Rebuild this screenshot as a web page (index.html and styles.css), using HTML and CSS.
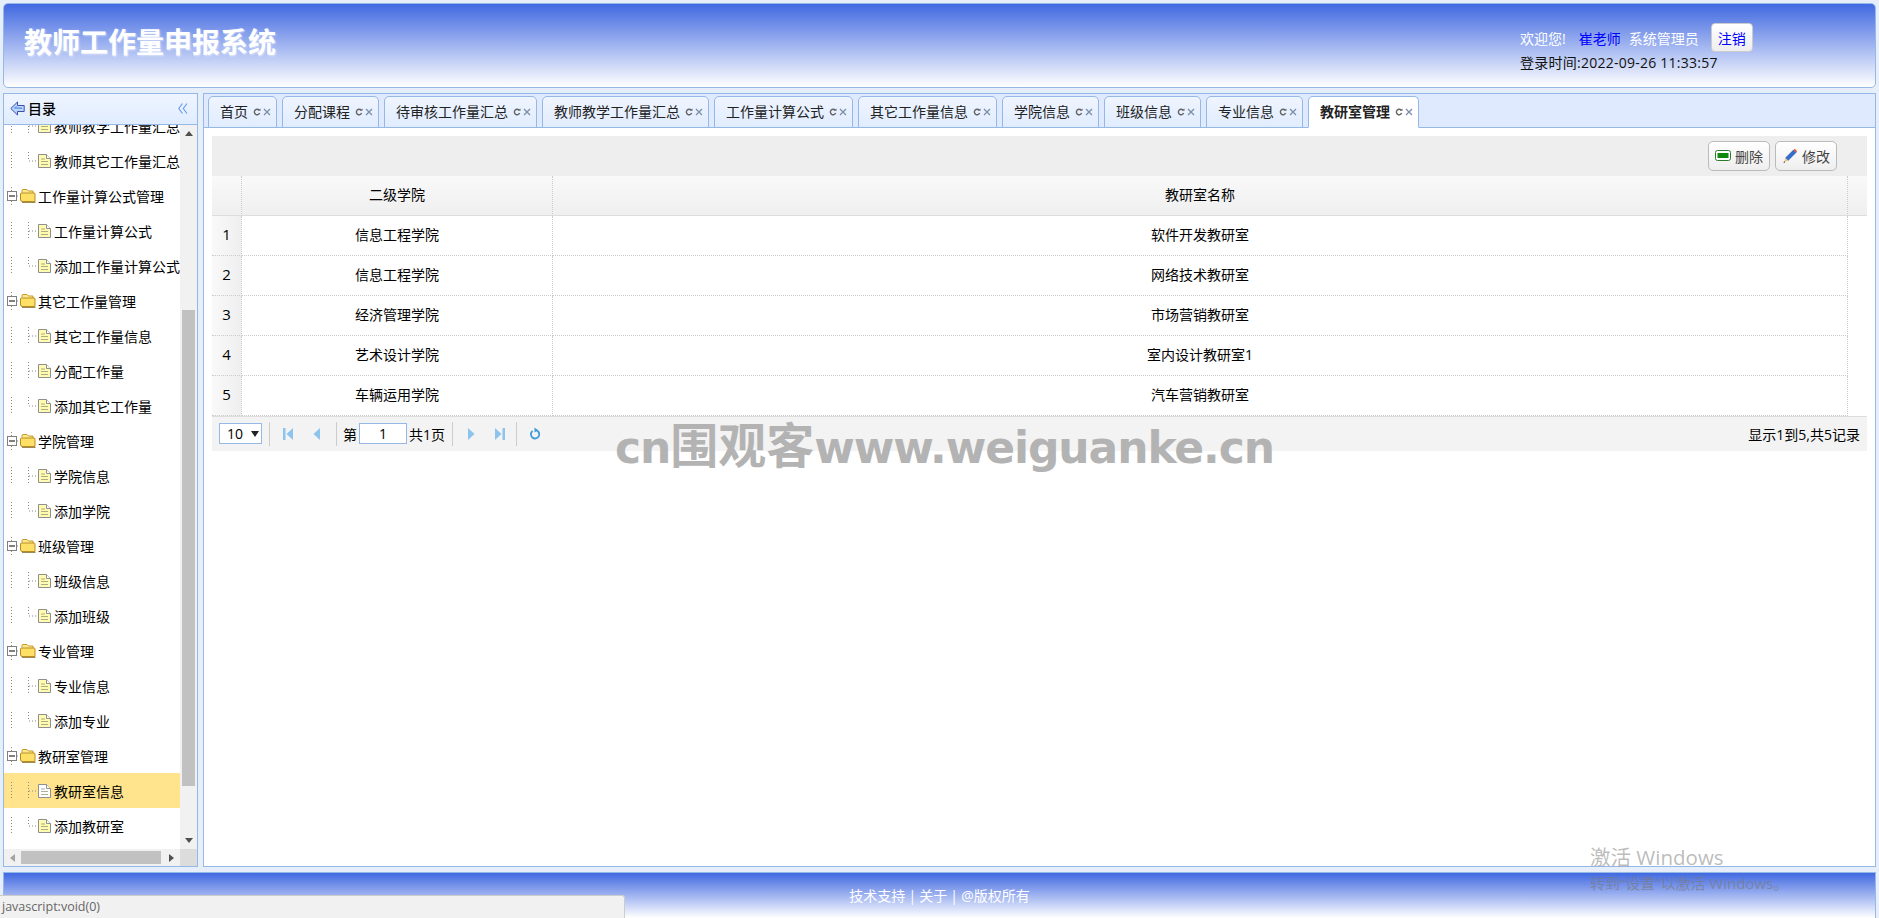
FILE: index.html
```html
<!DOCTYPE html>
<html lang="zh-CN">
<head>
    <meta charset="UTF-8">
    <meta name="viewport" content="width=device-width, initial-scale=1.0">
    <title>教师工作量申报系统</title>
    <link rel="stylesheet" href="styles.css">
</head>
<body>
    <svg class="sprites" width="0" height="0">
        <symbol id="lead-tee" viewBox="0 0 34 24">
            <path d="M7.500 3V21M24.500 3V21M25 12H33" stroke="#888" stroke-dasharray="1 2" fill="none"/>
        </symbol>
        <symbol id="lead-end" viewBox="0 0 34 24">
            <path d="M7.500 3V21M24.500 3V12M25 12H33" stroke="#888" stroke-dasharray="1 2" fill="none"/>
        </symbol>
        <symbol id="file" viewBox="0 0 13 14">
            <path d="M.5.5H8.500L12.500 4.500V13.500H.5Z" fill="var(--sheet, #fffbb0)" stroke="#8f8f8f"/>
            <path d="M8.500.5V4.500H12.500" fill="#fff" stroke="#8f8f8f"/>
            <path d="M3 5H7M3 7.500H10M3 10.500H10" stroke="#8a8a70" stroke-width=".7"/>
        </symbol>
        <symbol id="folder" viewBox="0 0 34 24">
            <path d="M7.500 3V7M7.500 17V22M13 12H16" stroke="#888" stroke-dasharray="1 2" fill="none"/>
            <rect x="3.500" y="7.500" width="9" height="9" fill="#fff" stroke="#808080"/>
            <path d="M5 12H11" stroke="#000"/>
            <path d="M18 8.500V6.500Q18 5.500 19 5.500H23L24.500 7H29V9" fill="#ffe98a" stroke="#c79a2a"/>
            <path d="M16.500 10Q16.500 9 17.500 9H30Q31 9 31 10V17.500H18Q16.500 17.500 16.500 15Z" fill="#ffe066" stroke="#b98c1e"/>
            <path d="M18 18.500H31.500" stroke="#9c8a5a"/>
        </symbol>
        <symbol id="tab-reload" viewBox="0 0 8 8">
            <path d="M6.200 2.300A2.700 2.700 0 1 0 6.600 5" fill="none" stroke="#666" stroke-width="1.400"/>
            <path d="M4.800 2.800H7.500V.4Z" fill="#666"/>
        </symbol>
        <symbol id="tab-close" viewBox="0 0 8 8">
            <path d="M1 1L7 7M7 1L1 7" stroke="#7b8ea8" stroke-width="1.300"/>
        </symbol>
    </svg>

    <header class="top-bar">
        <h1 class="app-title">教师工作量申报系统</h1>
        <div class="user-box">
            <div class="user-line">
                <span class="welcome">欢迎您!</span>
                <a class="user-name">崔老师</a>
                <span class="welcome">系统管理员</span>
                <button class="logout">注销</button>
            </div>
            <div class="login-time">登录时间:2022-09-26 11:33:57</div>
        </div>
    </header>

    <main class="workspace">
        <aside class="side-panel">
            <div class="side-head">
                <svg class="side-icon" width="15" height="15" viewBox="0 0 15 15">
                    <path d="M.8 7.500L7.500 1V4.500H14.200V10.500H7.500V14Z" fill="#bcd6f8" stroke="#3a4fb0"/>
                    <path d="M3.500 7.500L6.500 4.800V6.500H12V8Z" fill="#5b93e6"/>
                </svg>
                <span class="side-title">目录</span>
                <svg class="side-collapse" width="10" height="11" viewBox="0 0 10 11">
                    <path d="M4.500 .5L.8 5.500L4.500 10.500M9 .5L5.300 5.500L9 10.500" fill="none" stroke="#6f9fe6" stroke-width="1.200"/>
                </svg>
            </div>
            <div class="side-body">
                <div class="tree-view">
                    <ul class="tree">
                        <li class="leaf"><svg class="lead"><use href="#lead-tee"/></svg><svg class="file"><use href="#file"/></svg>教师教学工作量汇总</li>
                        <li class="leaf"><svg class="lead"><use href="#lead-end"/></svg><svg class="file"><use href="#file"/></svg>教师其它工作量汇总</li>
                        <li class="leaf"><svg class="lead"><use href="#folder"/></svg>工作量计算公式管理</li>
                        <li class="leaf"><svg class="lead"><use href="#lead-tee"/></svg><svg class="file"><use href="#file"/></svg>工作量计算公式</li>
                        <li class="leaf"><svg class="lead"><use href="#lead-end"/></svg><svg class="file"><use href="#file"/></svg>添加工作量计算公式</li>
                        <li class="leaf"><svg class="lead"><use href="#folder"/></svg>其它工作量管理</li>
                        <li class="leaf"><svg class="lead"><use href="#lead-tee"/></svg><svg class="file"><use href="#file"/></svg>其它工作量信息</li>
                        <li class="leaf"><svg class="lead"><use href="#lead-tee"/></svg><svg class="file"><use href="#file"/></svg>分配工作量</li>
                        <li class="leaf"><svg class="lead"><use href="#lead-end"/></svg><svg class="file"><use href="#file"/></svg>添加其它工作量</li>
                        <li class="leaf"><svg class="lead"><use href="#folder"/></svg>学院管理</li>
                        <li class="leaf"><svg class="lead"><use href="#lead-tee"/></svg><svg class="file"><use href="#file"/></svg>学院信息</li>
                        <li class="leaf"><svg class="lead"><use href="#lead-end"/></svg><svg class="file"><use href="#file"/></svg>添加学院</li>
                        <li class="leaf"><svg class="lead"><use href="#folder"/></svg>班级管理</li>
                        <li class="leaf"><svg class="lead"><use href="#lead-tee"/></svg><svg class="file"><use href="#file"/></svg>班级信息</li>
                        <li class="leaf"><svg class="lead"><use href="#lead-end"/></svg><svg class="file"><use href="#file"/></svg>添加班级</li>
                        <li class="leaf"><svg class="lead"><use href="#folder"/></svg>专业管理</li>
                        <li class="leaf"><svg class="lead"><use href="#lead-tee"/></svg><svg class="file"><use href="#file"/></svg>专业信息</li>
                        <li class="leaf"><svg class="lead"><use href="#lead-end"/></svg><svg class="file"><use href="#file"/></svg>添加专业</li>
                        <li class="leaf"><svg class="lead"><use href="#folder"/></svg>教研室管理</li>
                        <li class="leaf selected"><svg class="lead"><use href="#lead-tee"/></svg><svg class="file"><use href="#file"/></svg>教研室信息</li>
                        <li class="leaf"><svg class="lead"><use href="#lead-end"/></svg><svg class="file"><use href="#file"/></svg>添加教研室</li>
                    </ul>
                </div>
                <div class="v-scroll">
                    <span class="arrow arrow-up"></span>
                    <span class="v-thumb"></span>
                    <span class="arrow arrow-down"></span>
                </div>
            </div>
            <div class="h-scroll">
                <span class="arrow arrow-left"></span>
                <span class="h-thumb"></span>
                <span class="arrow arrow-right"></span>
                <span class="corner"></span>
            </div>
        </aside>

        <section class="center-panel">
            <nav class="tabs">
                <a class="tab">首页<svg class="tab-btn first"><use href="#tab-reload"/></svg><svg class="tab-btn"><use href="#tab-close"/></svg></a>
                <a class="tab">分配课程<svg class="tab-btn first"><use href="#tab-reload"/></svg><svg class="tab-btn"><use href="#tab-close"/></svg></a>
                <a class="tab">待审核工作量汇总<svg class="tab-btn first"><use href="#tab-reload"/></svg><svg class="tab-btn"><use href="#tab-close"/></svg></a>
                <a class="tab">教师教学工作量汇总<svg class="tab-btn first"><use href="#tab-reload"/></svg><svg class="tab-btn"><use href="#tab-close"/></svg></a>
                <a class="tab">工作量计算公式<svg class="tab-btn first"><use href="#tab-reload"/></svg><svg class="tab-btn"><use href="#tab-close"/></svg></a>
                <a class="tab">其它工作量信息<svg class="tab-btn first"><use href="#tab-reload"/></svg><svg class="tab-btn"><use href="#tab-close"/></svg></a>
                <a class="tab">学院信息<svg class="tab-btn first"><use href="#tab-reload"/></svg><svg class="tab-btn"><use href="#tab-close"/></svg></a>
                <a class="tab">班级信息<svg class="tab-btn first"><use href="#tab-reload"/></svg><svg class="tab-btn"><use href="#tab-close"/></svg></a>
                <a class="tab">专业信息<svg class="tab-btn first"><use href="#tab-reload"/></svg><svg class="tab-btn"><use href="#tab-close"/></svg></a>
                <a class="tab active">教研室管理<svg class="tab-btn first"><use href="#tab-reload"/></svg><svg class="tab-btn"><use href="#tab-close"/></svg></a>
            </nav>
            <div class="tab-body">
                <div class="toolbar">
                    <button class="tool-btn">
                        <svg width="16" height="16" viewBox="0 0 16 16">
                            <rect x=".5" y="2.500" width="15" height="10" rx="2" fill="#fff" stroke="#2c7a2c"/>
                            <rect x="2.500" y="5" width="11" height="5" fill="#0f8a0f"/>
                        </svg>
                        删除
                    </button>
                    <button class="tool-btn">
                        <svg width="16" height="16" viewBox="0 0 16 16">
                            <path d="M3.500 10L11.500 2L14 4.500L6 12.500Z" fill="#2f6fd0" stroke="#1c4c9c" stroke-width=".6"/>
                            <path d="M11.500 2L12.800 .8L15.200 3.200L14 4.500Z" fill="#e8563c"/>
                            <path d="M3.500 10L6 12.500L1.500 15Z" fill="#f0c98a"/>
                            <path d="M1.500 15L2.300 13.300L3.200 14.200Z" fill="#333"/>
                        </svg>
                        修改
                    </button>
                </div>
                <table class="grid">
                    <colgroup>
                        <col class="col-num"><col class="col-college"><col><col class="col-fill">
                    </colgroup>
                    <thead>
                        <tr><th></th><th>二级学院</th><th>教研室名称</th><th></th></tr>
                    </thead>
                    <tbody>
                        <tr><td class="row-num">1</td><td>信息工程学院</td><td>软件开发教研室</td><td class="blank"></td></tr>
                        <tr><td class="row-num">2</td><td>信息工程学院</td><td>网络技术教研室</td><td class="blank"></td></tr>
                        <tr><td class="row-num">3</td><td>经济管理学院</td><td>市场营销教研室</td><td class="blank"></td></tr>
                        <tr><td class="row-num">4</td><td>艺术设计学院</td><td>室内设计教研室1</td><td class="blank"></td></tr>
                        <tr><td class="row-num">5</td><td>车辆运用学院</td><td>汽车营销教研室</td><td class="blank"></td></tr>
                    </tbody>
                </table>
                <div class="pager">
                    <div class="page-size">10<span class="caret"></span></div>
                    <span class="sep"></span>
                    <svg class="page-icon" viewBox="0 0 12 14"><path d="M1 1H3.500V13H1ZM11 1V13L4.500 7Z" fill="#8cc4ee"/></svg>
                    <svg class="page-icon" viewBox="0 0 12 14"><path d="M9 1V13L2.500 7Z" fill="#8cc4ee"/></svg>
                    <span class="sep"></span>
                    <span class="page-label">第</span>
                    <span class="page-input">1</span>
                    <span class="page-label">共1页</span>
                    <span class="sep"></span>
                    <svg class="page-icon" viewBox="0 0 12 14"><path d="M3 1V13L9.500 7Z" fill="#8cc4ee"/></svg>
                    <svg class="page-icon page-last" viewBox="0 0 12 14"><path d="M1 1V13L7.500 7ZM8.500 1H11V13H8.500Z" fill="#8cc4ee"/></svg>
                    <span class="sep"></span>
                    <svg class="page-icon" viewBox="0 0 12 14"><path d="M7 3.200A4.200 4.200 0 1 1 3.600 3.900" fill="none" stroke="#3c9bd8" stroke-width="1.800"/><path d="M5.500 .5L9 3.200L5.500 5.500Z" fill="#3c9bd8"/></svg>
                    <span class="page-info">显示1到5,共5记录</span>
                </div>
            </div>
        </section>
    </main>

    <footer class="bottom-bar">技术支持 | 关于 | @版权所有</footer>

    <div class="status-bubble">javascript:void(0)</div>
    <div class="site-mark"><span class="mark-latin">cn</span>围观客<span class="mark-latin">www.weiguanke.cn</span></div>
    <div class="activate">
        <div class="activate-title">激活 Windows</div>
        <div class="activate-sub">转到“设置”以激活 Windows。</div>
    </div>
</body>
</html>
```

FILE: styles.css
```css
* {
    box-sizing: border-box;
}
html, body {
    height: 100%;
}
body {
    margin: 0;
    padding: 3px 3px 0 3px;
    display: flex;
    flex-direction: column;
    gap: 5px;
    overflow: hidden;
    background: #e6eefa;
    color: #000;
    font-family: "Open Sans", "Noto Sans CJK SC", sans-serif;
    font-size: 14px;
}
.sprites {
    position: absolute;
}

/* top */
.top-bar {
    height: 85px;
    flex: none;
    display: flex;
    justify-content: space-between;
    align-items: center;
    padding: 0 112px 0 20px;
    border: 1px solid #95b8e7;
    border-radius: 5px;
    background: linear-gradient(to bottom, #4169e1, #fff);
}
.app-title {
    margin: 0 0 8px;
    font-size: 28px;
    line-height: 40px;
    color: #fff;
    text-shadow: 1px 1px 2px rgba(255, 255, 255, 0.5);
}
.user-box {
    width: 243px;
    margin-top: 5px;
}
.user-line {
    display: flex;
    align-items: center;
    height: 29px;
}
.welcome {
    color: #fff;
}
.user-name {
    margin: 0 8px 0 13px;
    color: #00f;
}
.logout {
    width: 42px;
    height: 29px;
    margin-left: 12px;
    padding: 0;
    border: 1px solid #ccc;
    border-radius: 4px;
    background: linear-gradient(to bottom, #fff, #eee);
    color: #00f;
    font: inherit;
}
.login-time {
    margin-top: 1px;
    line-height: 20px;
    letter-spacing: 0.25px;
    color: #111;
}

/* main area */
.workspace {
    flex: none;
    height: 774px;
    display: flex;
    gap: 5px;
}
.side-panel {
    width: 195px;
    flex: none;
    display: flex;
    flex-direction: column;
    border: 1px solid #95b8e7;
    background: #fff;
}
.side-head {
    height: 31px;
    flex: none;
    display: flex;
    align-items: center;
    padding: 0 9px 2px 6px;
    border-bottom: 1px solid #95b8e7;
    background: linear-gradient(to bottom, #eff5ff, #e0ecff);
}
.side-title {
    margin-left: 3px;
    font-weight: 500;
}
.side-collapse {
    margin-left: auto;
}
.side-body {
    flex: 1;
    min-height: 0;
    display: flex;
}
.tree-view {
    flex: 1;
    min-width: 0;
    overflow: hidden;
}
.tree {
    margin: -17px 0 0;
    padding: 0;
    list-style: none;
}
.leaf {
    height: 35px;
    display: flex;
    align-items: center;
    white-space: nowrap;
}
.leaf.selected {
    --sheet: #fff;
    background: #ffe48d;
}
.lead {
    width: 34px;
    height: 24px;
    flex: none;
}
.file {
    width: 13px;
    height: 14px;
    flex: none;
    margin-right: 3px;
}
.v-scroll {
    width: 17px;
    flex: none;
    display: flex;
    flex-direction: column;
    align-items: center;
    background: #f1f1f1;
}
.v-thumb {
    width: 13px;
    height: 476px;
    margin-top: 168px;
    background: #c1c1c1;
}
.arrow {
    width: 17px;
    height: 17px;
    flex: none;
    display: flex;
    align-items: center;
    justify-content: center;
}
.arrow::before {
    content: "";
    border: 4px solid transparent;
}
.arrow-up::before {
    border-top-width: 0;
    border-bottom: 5px solid #505050;
}
.arrow-down {
    margin-top: auto;
}
.arrow-down::before {
    border-bottom-width: 0;
    border-top: 5px solid #505050;
}
.arrow-left::before {
    border-left-width: 0;
    border-right: 5px solid #a3a3a3;
}
.arrow-right::before {
    border-right-width: 0;
    border-left: 5px solid #505050;
}
.h-scroll {
    height: 17px;
    flex: none;
    display: flex;
    align-items: center;
    background: #f1f1f1;
}
.h-thumb {
    width: 140px;
    height: 13px;
    background: #c1c1c1;
}
.arrow-right {
    margin-left: auto;
}
.corner {
    width: 17px;
    height: 17px;
    background: #dcdcdc;
}

/* tabs */
.center-panel {
    flex: 1;
    min-width: 0;
    display: flex;
    flex-direction: column;
    border: 1px solid #95b8e7;
    background: #fff;
}
.tabs {
    height: 34px;
    flex: none;
    display: flex;
    align-items: flex-end;
    gap: 5px;
    padding-left: 4px;
    border-bottom: 1px solid #95b8e7;
    background: #dfeaff;
}
.tab {
    height: 32px;
    margin-bottom: -1px;
    display: flex;
    align-items: center;
    padding: 0 0 2px 11px;
    border: 1px solid #95b8e7;
    border-radius: 5px 5px 0 0;
    background: linear-gradient(to bottom, #eff5ff, #e0ecff);
    color: #222;
}
.tab.active {
    border-bottom-color: #fff;
    background: #fff;
    font-weight: 700;
}
.tab-btn {
    width: 8px;
    height: 8px;
    flex: none;
    margin: 2px 5px 0 0;
}
.tab-btn.first {
    margin-left: 5px;
    margin-right: 2px;
}
.tab-body {
    flex: 1;
    padding: 8px;
}
.toolbar {
    height: 40px;
    display: flex;
    align-items: center;
    justify-content: flex-end;
    gap: 5px;
    padding-right: 30px;
    background: #eee;
}
.tool-btn {
    width: 62px;
    height: 30px;
    display: flex;
    align-items: center;
    gap: 4px;
    padding: 0 0 0 6px;
    border: 1px solid #bbb;
    border-radius: 5px;
    background: linear-gradient(to bottom, #fff, #eee);
    color: #444;
    font: inherit;
}

/* grid */
.grid {
    width: 100%;
    table-layout: fixed;
    border-collapse: separate;
    border-spacing: 0;
}
.col-num {
    width: 30px;
}
.col-college {
    width: 311px;
}
.col-fill {
    width: 19px;
}
.grid th {
    height: 40px;
    padding: 0 0 3px;
    border-right: 1px dotted #ccc;
    border-bottom: 1px solid #ddd;
    background: linear-gradient(to bottom, #f9f9f9, #efefef);
    font-weight: 400;
}
.grid th:last-child {
    border-right: 0;
}
.grid td {
    height: 40px;
    padding: 0 0 3px;
    border-right: 1px dotted #ccc;
    border-bottom: 1px dotted #ccc;
    text-align: center;
}
.grid .row-num {
    background: linear-gradient(to right, #f9f9f9, #efefef);
    font-size: 15px;
}
.grid .blank {
    border-right: 0;
    border-bottom: 0;
}

/* pager */
.pager {
    height: 35px;
    display: flex;
    align-items: center;
    padding: 0 7px 1px;
    border-top: 1px solid #ddd;
    background: #f3f3f3;
}
.page-size {
    width: 43px;
    height: 21px;
    display: flex;
    align-items: center;
    padding-left: 7px;
    border: 1px solid #95b8e7;
    background: #fff;
    line-height: 19px;
}
.caret {
    margin: 1px 0 0 8px;
    border: 4px solid transparent;
    border-bottom-width: 0;
    border-top: 6px solid #222;
}
.sep {
    width: 1px;
    height: 24px;
    margin: 0 7px;
    background: #ccc;
}
.sep + .page-label {
    margin-left: -1px;
}
.page-icon {
    width: 12px;
    height: 14px;
    margin: 0 6px;
}
.page-icon + .page-icon {
    margin-left: 11px;
}
.sep + .page-icon {
    margin-left: 5px;
}
.page-icon.page-last {
    margin-right: 3px;
}
.page-input {
    width: 48px;
    height: 21px;
    margin: 0 2px;
    border: 1px solid #95b8e7;
    background: #fff;
    line-height: 19px;
    text-align: center;
}
.page-info {
    margin-left: auto;
}

/* bottom */
.bottom-bar {
    height: 46px;
    flex: none;
    padding-top: 11px;
    border: 1px solid #95b8e7;
    border-bottom: 0;
    background: linear-gradient(to bottom, #4169e1, #fff);
    color: #fff;
    line-height: 24px;
    word-spacing: -0.500px;
    text-align: center;
}

/* things drawn over the page */
.status-bubble {
    position: absolute;
    left: 0;
    bottom: 0;
    width: 625px;
    height: 23px;
    padding-left: 2px;
    border-top: 1px solid #ccc;
    border-right: 1px solid #ccc;
    border-radius: 0 3px 0 0;
    background: #f1f1f1;
    color: #666;
    font-size: 12.500px;
    line-height: 22px;
}
.site-mark {
    position: absolute;
    left: 615px;
    top: 409px;
    color: #b3b3b3;
    font-family: "Noto Sans CJK SC", sans-serif;
    font-size: 48px;
    font-weight: 700;
    line-height: 66px;
    white-space: nowrap;
}
.mark-latin {
    font-family: "DejaVu Sans", sans-serif;
    font-size: 44px;
    letter-spacing: -1.100px;
}
.activate {
    position: absolute;
    left: 1590px;
    top: 843px;
    pointer-events: none;
}
.activate-title {
    font-size: 20.500px;
    line-height: 28px;
    color: rgba(150, 150, 150, 0.65);
}
.activate-sub {
    font-size: 15px;
    line-height: 24px;
    color: rgba(120, 120, 120, 0.6);
}
```
